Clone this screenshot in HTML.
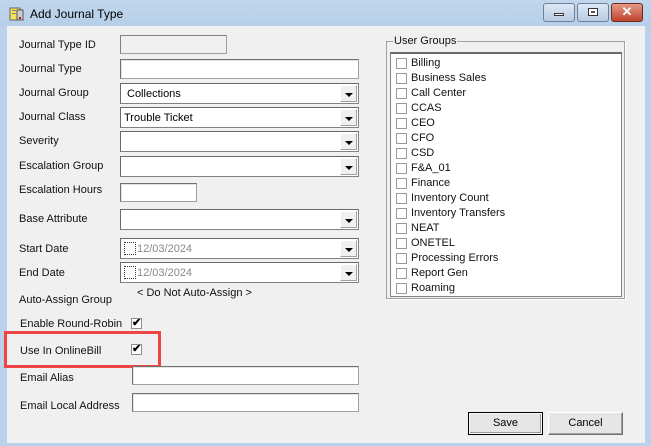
<!DOCTYPE html>
<html><head><style>
*{box-sizing:border-box;margin:0;padding:0}
body{width:651px;height:446px;overflow:hidden;background:#b9d1ea;font-family:"Liberation Sans",sans-serif;font-size:11px;color:#000;position:relative}
.a{position:absolute}
.content{left:7px;top:26px;width:638px;height:417px;background:#f0f0f0}
.lbl{position:absolute;font-size:11px;color:#111}
.tb{position:absolute;background:#fff;border:1px solid #a0a0a0;border-top-color:#707070;border-left-color:#707070;box-shadow:inset 1px 1px 0 #e3e3e3}
.cb{position:absolute;background:#fff;border:1px solid #828282;border-top-color:#696969;border-left-color:#696969}
.cb .t{position:absolute;left:3px;top:4px;font-size:11px}
.cb .dd{position:absolute;right:1px;top:1px;bottom:1px;width:17px;background:#f0f0f0;border:1px solid #fff;border-right-color:#a0a0a0;border-bottom-color:#a0a0a0}
.cb .dd:after{content:"";position:absolute;left:4px;top:7px;border-left:4px solid transparent;border-right:4px solid transparent;border-top:4px solid #000}
.chk{position:absolute;width:11px;height:11px;border:1px solid #8f8f8f;background:#fff}
.item{position:absolute;left:5px;height:15px}
.item .chk{left:0;top:2px;width:11px;height:11px;border-color:#999}
.item span{position:absolute;left:15px;top:1px;white-space:nowrap;color:#111}
.btn{position:absolute;background:#e6e6e6;border:1px solid #707070;text-align:center;line-height:21px;font-size:11px}
.ck{font-size:11px;line-height:9px;text-align:center;font-weight:bold}
</style></head><body>
<div class="a" style="left:0;top:0;width:651px;height:26px;background:linear-gradient(#c1d6ec,#b6cfe9)"></div>
<svg class="a" style="left:9px;top:6px" width="16" height="16" viewBox="0 0 16 16"><rect x="1" y="2" width="10" height="12" fill="#f2e25a" stroke="#666"/><rect x="8" y="4" width="6" height="10" fill="#ccc" stroke="#555"/><rect x="3" y="4" width="5" height="1" fill="#888"/><rect x="3" y="7" width="5" height="1" fill="#888"/><rect x="10" y="11" width="2" height="2" fill="#c00"/></svg>
<div class="a" style="left:30px;top:7px;font-size:12px;color:#000">Add Journal Type</div>
<div class="a" style="left:543px;top:3px;width:32px;height:19px;border:1px solid #6d7f99;border-radius:3px;background:linear-gradient(#dde8f4,#b8cbe2)"><div class="a" style="left:10px;top:9px;width:10px;height:3px;background:#fff;border:1px solid #333"></div></div>
<div class="a" style="left:577px;top:3px;width:32px;height:19px;border:1px solid #6d7f99;border-radius:3px;background:linear-gradient(#dde8f4,#b8cbe2)"><div class="a" style="left:10px;top:4px;width:10px;height:8px;border:1px solid #333;background:#fff;box-shadow:inset 0 0 0 2px #fff,inset 0 0 0 3px #555"></div></div>
<div class="a" style="left:611px;top:3px;width:32px;height:19px;border:1px solid #6b2a20;border-radius:3px;background:linear-gradient(#e49a85,#c0432e);color:#fff;font-weight:bold;font-size:13px;text-align:center;line-height:16px">✕</div>
<div class="a content"></div>

<div class="lbl" style="left:19px;top:39px">Journal Type ID</div>
<div class="a" style="left:120px;top:35px;width:107px;height:19px;background:#f0f0f0;border:1px solid #a0a0a0;border-top-color:#808080;border-left-color:#808080"></div>
<div class="lbl" style="left:19px;top:63px">Journal Type</div>
<div class="tb" style="left:120px;top:59px;width:239px;height:20px"></div>
<div class="lbl" style="left:19px;top:87px">Journal Group</div>
<div class="cb" style="left:120px;top:83px;width:239px;height:21px"><span class="t" style="left:6px">Collections</span><div class="dd"></div></div>
<div class="lbl" style="left:19px;top:111px">Journal Class</div>
<div class="cb" style="left:120px;top:107px;width:239px;height:21px"><span class="t">Trouble Ticket</span><div class="dd"></div></div>
<div class="lbl" style="left:19px;top:135px">Severity</div>
<div class="cb" style="left:120px;top:131px;width:239px;height:21px"><div class="dd"></div></div>
<div class="lbl" style="left:19px;top:160px">Escalation Group</div>
<div class="cb" style="left:120px;top:156px;width:239px;height:21px"><div class="dd"></div></div>
<div class="lbl" style="left:19px;top:184px">Escalation Hours</div>
<div class="tb" style="left:120px;top:183px;width:77px;height:19px"></div>
<div class="lbl" style="left:19px;top:213px">Base Attribute</div>
<div class="cb" style="left:120px;top:209px;width:239px;height:21px"><div class="dd"></div></div>
<div class="lbl" style="left:19px;top:243px">Start Date</div>
<div class="cb" style="left:120px;top:238px;width:239px;height:21px"><div class="a" style="left:3px;top:3px;width:12px;height:13px;border:1px dotted #333"></div><span class="t" style="left:16px;color:#888">12/03/2024</span><div class="dd"></div></div>
<div class="lbl" style="left:19px;top:267px">End Date</div>
<div class="cb" style="left:120px;top:262px;width:239px;height:21px"><div class="a" style="left:3px;top:3px;width:12px;height:13px;border:1px dotted #333"></div><span class="t" style="left:16px;color:#888">12/03/2024</span><div class="dd"></div></div>
<div class="lbl" style="left:137px;top:287px">&lt; Do Not Auto-Assign &gt;</div>
<div class="lbl" style="left:19px;top:294px">Auto-Assign Group</div>
<div class="lbl" style="left:20px;top:318px">Enable Round-Robin</div>
<div class="chk ck" style="left:131px;top:318px">✔</div>
<div class="lbl" style="left:20px;top:345px">Use In OnlineBill</div>
<div class="chk ck" style="left:131px;top:344px">✔</div>
<div class="a" style="left:4px;top:331px;width:157px;height:37px;border:3px solid #ee4444"></div>
<div class="lbl" style="left:20px;top:372px">Email Alias</div>
<div class="tb" style="left:132px;top:366px;width:227px;height:19px"></div>
<div class="lbl" style="left:20px;top:400px">Email Local Address</div>
<div class="tb" style="left:132px;top:393px;width:227px;height:19px"></div>

<div class="a" style="left:386px;top:41px;width:239px;height:258px;border:1px solid #a0a0a0;box-shadow:1px 1px 0 #fff"></div>
<div class="a" style="left:393px;top:35px;background:#f0f0f0;padding:0 1px;color:#111">User Groups</div>
<div class="a" style="left:390px;top:52px;width:232px;height:245px;background:#fff;border:1px solid #828282;border-top:2px solid #696969">
<div class="item" style="top:2px"><div class="chk"></div><span>Billing</span></div>
<div class="item" style="top:17px"><div class="chk"></div><span>Business Sales</span></div>
<div class="item" style="top:32px"><div class="chk"></div><span>Call Center</span></div>
<div class="item" style="top:47px"><div class="chk"></div><span>CCAS</span></div>
<div class="item" style="top:62px"><div class="chk"></div><span>CEO</span></div>
<div class="item" style="top:77px"><div class="chk"></div><span>CFO</span></div>
<div class="item" style="top:92px"><div class="chk"></div><span>CSD</span></div>
<div class="item" style="top:107px"><div class="chk"></div><span>F&amp;A_01</span></div>
<div class="item" style="top:122px"><div class="chk"></div><span>Finance</span></div>
<div class="item" style="top:137px"><div class="chk"></div><span>Inventory Count</span></div>
<div class="item" style="top:152px"><div class="chk"></div><span>Inventory Transfers</span></div>
<div class="item" style="top:167px"><div class="chk"></div><span>NEAT</span></div>
<div class="item" style="top:182px"><div class="chk"></div><span>ONETEL</span></div>
<div class="item" style="top:197px"><div class="chk"></div><span>Processing Errors</span></div>
<div class="item" style="top:212px"><div class="chk"></div><span>Report Gen</span></div>
<div class="item" style="top:227px"><div class="chk"></div><span>Roaming</span></div>
</div>

<div class="btn" style="left:468px;top:412px;width:75px;height:23px;border:1px solid #000;box-shadow:inset 0 0 0 1px #f8f8f8,inset -1px -1px 0 1px #999">Save</div>
<div class="btn" style="left:548px;top:412px;width:75px;height:23px;border-color:#fff #707070 #707070 #fff;box-shadow:inset -1px -1px 0 #a0a0a0">Cancel</div>
</body></html>
